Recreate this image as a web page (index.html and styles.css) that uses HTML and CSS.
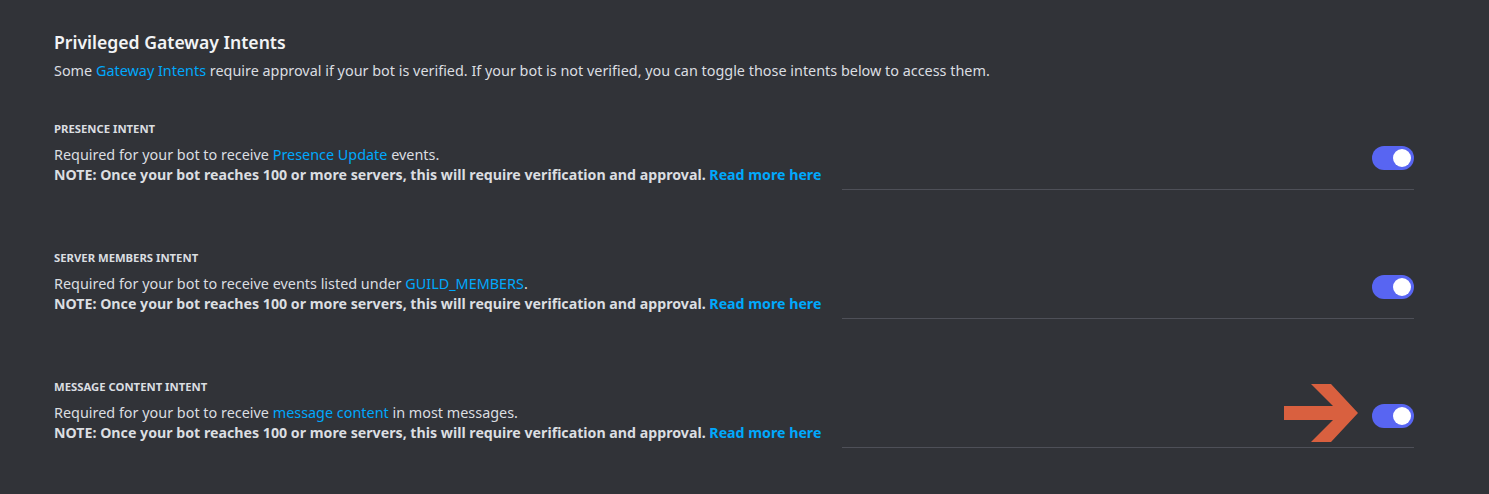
FILE: index.html
```html
<!DOCTYPE html>
<html lang="en">
<head>
<meta charset="utf-8">
<title>Privileged Gateway Intents</title>
<link rel="stylesheet" href="styles.css">
</head>
<body>
<main class="page">
  <h2 class="title">Privileged Gateway Intents</h2>
  <p class="desc">Some <a class="link" href="#">Gateway Intents</a> require approval if your bot is verified. If your bot is not verified, you can toggle those intents below to access them.</p>

  <section class="intent">
    <h3 class="label">PRESENCE INTENT</h3>
    <div class="row">
      <div class="text">
        <div class="line">Required for your bot to receive <a class="link" href="#">Presence Update</a> events.</div>
        <div class="note">NOTE: Once your bot reaches 100 or more servers, this will require verification and approval. <a class="link" href="#">Read more here</a></div>
      </div>
      <div class="side"><span class="toggle"><span class="knob"></span></span></div>
    </div>
  </section>

  <section class="intent">
    <h3 class="label">SERVER MEMBERS INTENT</h3>
    <div class="row">
      <div class="text">
        <div class="line">Required for your bot to receive events listed under <a class="link" href="#">GUILD_MEMBERS</a>.</div>
        <div class="note">NOTE: Once your bot reaches 100 or more servers, this will require verification and approval. <a class="link" href="#">Read more here</a></div>
      </div>
      <div class="side"><span class="toggle"><span class="knob"></span></span></div>
    </div>
  </section>

  <section class="intent">
    <h3 class="label">MESSAGE CONTENT INTENT</h3>
    <div class="row">
      <div class="text">
        <div class="line">Required for your bot to receive <a class="link" href="#">message content</a> in most messages.</div>
        <div class="note">NOTE: Once your bot reaches 100 or more servers, this will require verification and approval. <a class="link" href="#">Read more here</a></div>
      </div>
      <div class="side">
        <svg class="arrow" width="76" height="60" viewBox="0 0 76 60" aria-hidden="true">
          <polygon points="0,22 49,22 27,0 47,0 74,29 47,58 27,58 49,36 0,36" fill="#d9603f"/>
        </svg>
        <span class="toggle"><span class="knob"></span></span>
      </div>
    </div>
  </section>
</main>
</body>
</html>
```

FILE: styles.css
```css
html, body {
  margin: 0;
  padding: 0;
  background: #313338;
}

body {
  font-family: "Noto Sans", "Open Sans", sans-serif;
  color: #dbdee1;
  height: 494px;
  overflow: hidden;
}

.page {
  padding: 30px 75px 0 54px;
}

.title {
  margin: 0;
  font-size: 17.6px;
  line-height: 24px;
  font-weight: 600;
  color: #f2f3f5;
}

.desc {
  margin: 7px 0 0;
  font-size: 14.4px;
  line-height: 20px;
}

.link {
  color: #00a8fc;
  text-decoration: none;
}

.intent {
  margin-top: 40px;
}

.intent + .intent {
  margin-top: 60px;
}

.label {
  margin: 0;
  font-size: 11.3px;
  line-height: 16px;
  font-weight: 700;
  color: #dbdee1;
  text-transform: uppercase;
}

.row {
  display: flex;
  gap: 21px;
  margin-top: 8px;
}

.text {
  padding-bottom: 5px;
  font-size: 14.4px;
  line-height: 20px;
}

.note {
  font-weight: 700;
  font-size: 14.2px;
  color: #dbdee1;
}

.side {
  flex: 1;
  display: flex;
  justify-content: flex-end;
  align-items: flex-start;
  border-bottom: 1px solid #4e5058;
  position: relative;
}

.toggle {
  margin-top: 1px;
  width: 42px;
  height: 24px;
  border-radius: 12px;
  background: #5865f2;
  display: flex;
  align-items: center;
  justify-content: flex-end;
  padding-right: 3px;
  box-sizing: border-box;
}

.knob {
  width: 18px;
  height: 18px;
  border-radius: 50%;
  background: #ffffff;
}

.arrow {
  position: absolute;
  right: 54px;
  top: -19px;
}
```
